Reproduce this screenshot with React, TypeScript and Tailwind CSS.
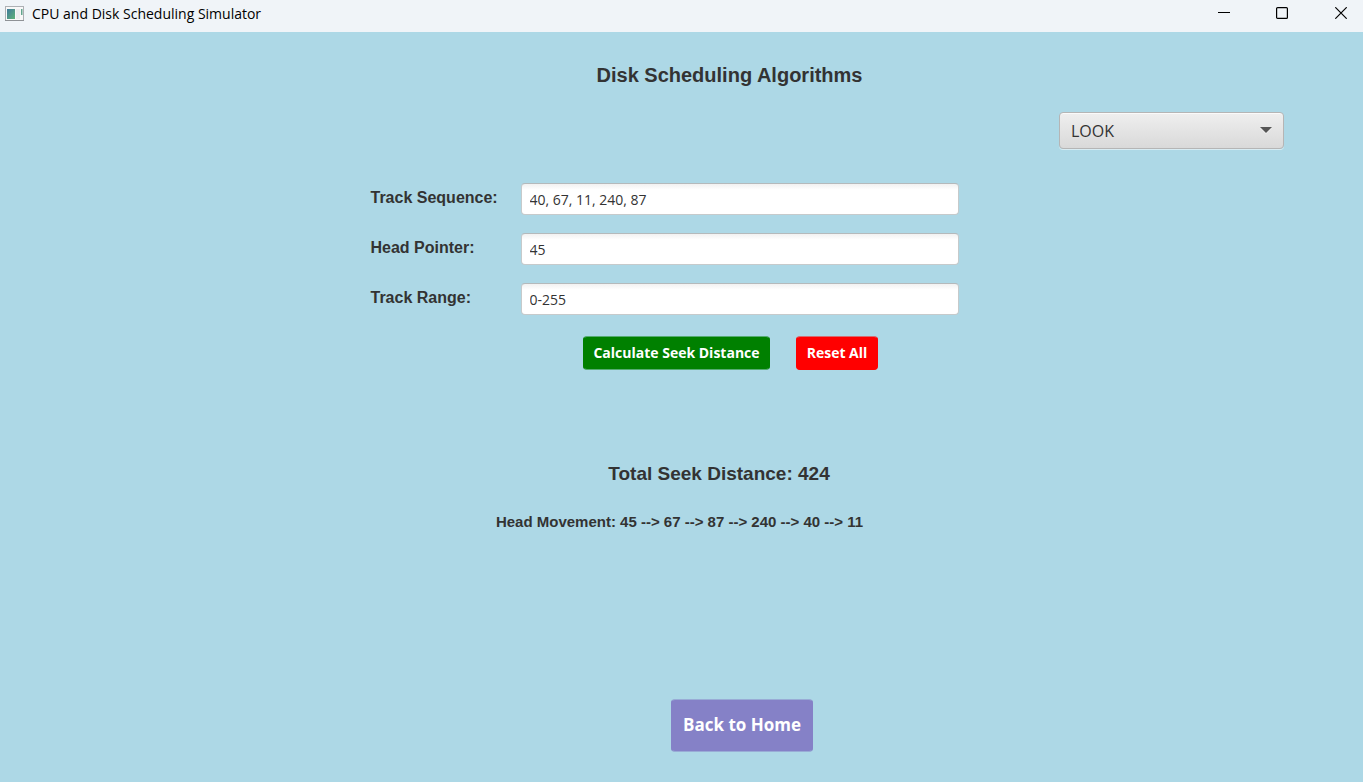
import { useState } from "react";

const fields = [
  { id: "track-sequence", label: "Track Sequence:", value: "40, 67, 11, 240, 87" },
  { id: "head-pointer", label: "Head Pointer:", value: "45" },
  { id: "track-range", label: "Track Range:", value: "0-255" },
];

function TitleBar() {
  return (
    <header className="flex h-8 items-start justify-between bg-[#f0f4f8] pl-[5px] text-black">
      <div className="flex h-7 items-center gap-2">
        <svg width="19" height="16" viewBox="0 0 19 16" aria-hidden="true">
          <defs>
            <linearGradient id="pane" x1="0" y1="0" x2="1" y2="1">
              <stop offset="0" stopColor="#3f7a9c" />
              <stop offset="1" stopColor="#5fb277" />
            </linearGradient>
          </defs>
          <rect x="0.5" y="0.5" width="18" height="14" fill="#f8f8f8" stroke="#adb0b4" />
          <path d="M0 14.5h19" stroke="#8f9296" />
          <rect x="2" y="3" width="8" height="10" fill="url(#pane)" />
          <rect x="11" y="3" width="4" height="10" fill="#ececee" />
          <rect x="16" y="3" width="1.5" height="6" fill="#62a58e" />
        </svg>
        <span className="font-['Open_Sans',sans-serif] text-sm leading-5">CPU and Disk Scheduling Simulator</span>
      </div>
      <div className="flex h-[26px]">
        <button aria-label="Minimize" className="flex w-[58px] items-center justify-center">
          <svg width="12" height="12" viewBox="0 0 12 12"><path d="M0 5.5h12" stroke="currentColor" /></svg>
        </button>
        <button aria-label="Maximize" className="flex w-[58px] items-center justify-center">
          <svg width="12" height="12" viewBox="0 0 12 12"><rect x="0.6" y="0.6" width="10.8" height="10.8" rx="1" fill="none" stroke="currentColor" strokeWidth="1.2" /></svg>
        </button>
        <button aria-label="Close" className="flex w-[52px] items-center justify-end pr-4">
          <svg width="12" height="12" viewBox="0 0 12 12"><path d="M0.3 0.3l11.4 11.4M11.7 0.3L0.3 11.7" stroke="currentColor" strokeWidth="1.2" /></svg>
        </button>
      </div>
    </header>
  );
}

export default function App() {
  const [values, setValues] = useState(fields.map((f) => f.value));

  return (
    <div className="flex min-h-screen flex-col bg-[#add8e6] font-['Liberation_Sans',Arial,sans-serif] text-[#333333]">
      <TitleBar />
      <main className="flex flex-1 flex-col">
        <h1 className="mt-7 pl-24 text-center text-xl leading-[30px] font-bold">Disk Scheduling Algorithms</h1>

        <div className="mt-[22px] mr-[79px] grid w-[225px] items-center self-end">
          <select
            aria-label="Algorithm"
            defaultValue="LOOK"
            className="col-start-1 row-start-1 h-[37px] appearance-none rounded-[4px] border border-[#b5b5b5] bg-linear-to-b from-[#efefef] to-[#d9d9d9] px-[11px] font-['Open_Sans',sans-serif] text-base leading-6 shadow-[inset_0_1px_0_#fafafa,0_1px_0_#d8ecf3]"
          >
            <option>FCFS</option>
            <option>SSTF</option>
            <option>SCAN</option>
            <option>LOOK</option>
          </select>
          <svg width="12" height="7" viewBox="0 0 12 7" className="pointer-events-none col-start-1 row-start-1 mr-3 justify-self-end" aria-hidden="true">
            <path d="M0 1h12l-6 6z" fill="#f2f2f2" />
            <path d="M0 0h12l-6 6z" fill="#555555" />
          </svg>
        </div>

        <form className="flex flex-col items-center" onSubmit={(e) => e.preventDefault()}>
          <div className="mt-[34px] flex flex-col gap-[18px] pr-[34px]">
            {fields.map((f, i) => (
              <div key={f.id} className="flex">
                <label htmlFor={f.id} className="w-[150px] pt-[3px] text-base leading-6 font-bold">
                  {f.label}
                </label>
                <input
                  id={f.id}
                  type="text"
                  value={values[i]}
                  onChange={(e) => setValues(values.map((v, j) => (j === i ? e.target.value : v)))}
                  className="h-8 w-[438px] rounded-[4px] border border-[#c6cacb] border-t-[#b4b9bb] bg-linear-to-b from-[#f1f1f1] to-white to-20% px-2 font-['Open_Sans',sans-serif] text-sm leading-5"
                />
              </div>
            ))}
          </div>
          <div className="mt-[21px] flex gap-[26px] pl-[98px] font-['Open_Sans',sans-serif] text-sm leading-5 font-bold text-white">
            <button type="button" className="h-[34px] w-[187px] rounded-[4px] border border-[#008000] border-y-[#56ac73] bg-[#008000] whitespace-nowrap">
              Calculate Seek Distance
            </button>
            <button type="button" onClick={() => setValues(fields.map(() => ""))} className="h-[34px] w-[82px] rounded-[4px] border border-[#ff0000] border-t-[#d66c73] bg-[#ff0000] whitespace-nowrap">
              Reset All
            </button>
          </div>
        </form>

        <section className="mt-[89px] text-center font-bold">
          <h2 className="pl-[75px] text-[19px] leading-[30px]">Total Seek Distance: 424</h2>
          <p className="mt-[23px] pr-1 text-[15px] leading-5">{"Head Movement: 45 --> 67 --> 87 --> 240 --> 40 --> 11"}</p>
        </section>

        <div className="mt-auto mb-[30px] flex justify-center pt-6 pl-[121px]">
          <button className="h-[53px] w-[142px] rounded-[4px] border border-[#8581c7] border-y-[#99acd6] bg-[#8581c7] pb-0.5 font-['Open_Sans',sans-serif] text-[17px] leading-6 font-bold whitespace-nowrap text-white">
            Back to Home
          </button>
        </div>
      </main>
    </div>
  );
}
